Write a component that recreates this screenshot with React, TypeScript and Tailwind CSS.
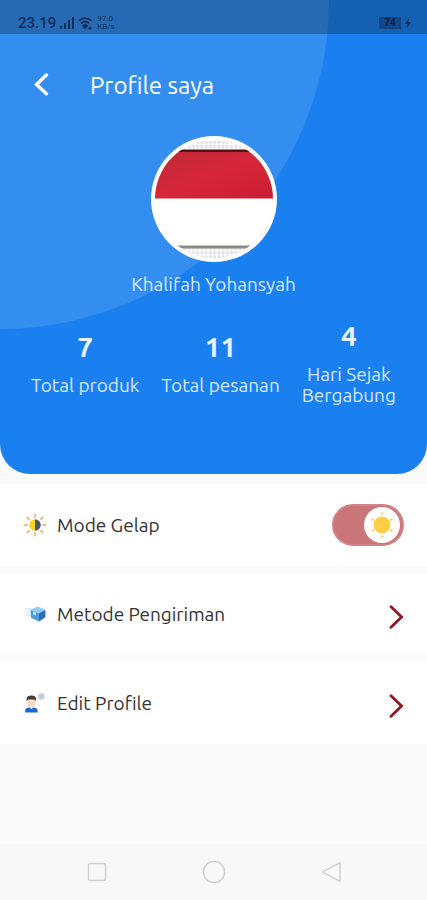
import React, { useState } from 'react';

const stats = [
  { value: '7', label: 'Total produk' },
  { value: '11', label: 'Total pesanan' },
  { value: '4', label: 'Hari Sejak\nBergabung' },
];

const StatusBar: React.FC = () => (
  <div className="relative flex h-[34px] items-end justify-between bg-black/25 pb-px pl-[18px] pr-4 font-['Roboto',sans-serif] text-[#0f2f58]">
    <div className="flex items-center gap-1">
      <span className="text-[15px] font-medium leading-5">23.19</span>
      <svg width="14" height="12" viewBox="0 0 14 12" fill="currentColor" aria-hidden="true">
        <rect x="0" y="9" width="2" height="3" />
        <rect x="4" y="6" width="2" height="6" />
        <rect x="8" y="3" width="2" height="9" />
        <rect x="12" y="0" width="2" height="12" />
      </svg>
      <svg width="15" height="13" viewBox="0 0 15 13" fill="none" stroke="currentColor" strokeWidth="1.6" aria-hidden="true">
        <path d="M0.8 4 Q7 -1.6 13.6 4" />
        <path d="M3 6.4 Q7 2.8 11.4 6.4" />
        <path d="M5 8.8 Q7 6.8 9.2 8.8 L7.2 11 Z" fill="currentColor" />
        <path d="M10 11.4 h4 M12 9.4 v3.4" strokeWidth="1.2" />
      </svg>
      <span className="flex flex-col text-[8px] leading-2">
        <span>97.0</span>
        <span>KB/s</span>
      </span>
    </div>
    <div className="flex h-5 items-center gap-1">
      <span className="flex h-3 w-[22px] items-center justify-center bg-[#0b2e5c]/50 text-[10px] font-bold leading-3 text-[#0a1f40]">74</span>
      <svg width="6" height="10" viewBox="0 0 6 10" fill="currentColor" aria-hidden="true">
        <path d="M4 0 L0 6 H2.6 L2 10 L6 4 H3.4 Z" />
      </svg>
    </div>
  </div>
);

const Avatar: React.FC = () => (
  <svg className="size-[126px]" viewBox="0 0 126 126" role="img" aria-label="Khalifah Yohansyah">
    <defs>
      <clipPath id="face">
        <circle cx="63" cy="63" r="59" />
      </clipPath>
      <pattern id="check" width="6" height="6" patternUnits="userSpaceOnUse" patternTransform="rotate(45)">
        <rect width="6" height="6" fill="#fbfbfb" />
        <rect width="3" height="3" fill="#e4e4e4" />
        <rect x="3" y="3" width="3" height="3" fill="#e4e4e4" />
      </pattern>
      <linearGradient id="red" x1="0" y1="0" x2="1" y2="1">
        <stop offset="0" stopColor="#bd2a38" />
        <stop offset="0.5" stopColor="#d7263a" />
        <stop offset="1" stopColor="#c91c30" />
      </linearGradient>
    </defs>
    <circle cx="63" cy="63" r="63" fill="#fff" />
    <g clipPath="url(#face)">
      <rect width="126" height="126" fill="url(#check)" />
      <rect y="15" width="126" height="48" fill="url(#red)" />
      <rect x="26" y="13.5" width="74" height="2.5" fill="#5a1019" />
      <rect y="62.5" width="126" height="48" fill="#fff" />
      <rect y="109.5" width="126" height="3" fill="#8d8984" />
    </g>
  </svg>
);

const SunMoonIcon: React.FC = () => (
  <svg width="24" height="24" viewBox="0 0 24 24" aria-hidden="true">
    <g stroke="#f3a868" strokeWidth="1.5" strokeLinecap="round">
      <path d="M12 1.2v3M12 19.8v3M1.2 12h3M19.8 12h3M4.2 4.4l2 2M17.8 17.6l2 2M4.2 19.6l2-2M17.8 6.4l2-2" />
    </g>
    <path d="M12 6.2a5.8 5.8 0 0 0 0 11.6Z" fill="#fbd51c" />
    <path d="M12 6.2a5.8 5.8 0 0 1 0 11.6Z" fill="#4d5566" />
  </svg>
);

const BoxIcon: React.FC = () => (
  <svg width="24" height="24" viewBox="0 0 24 24" aria-hidden="true">
    <path d="M2 7h8M4 10h5M3 13h5" stroke="#d3eaf8" strokeWidth="1.5" />
    <path d="M7.6 7.8 14.6 4.6 22.4 7.8 16 11.2Z" fill="#8fcdf2" />
    <path d="M7.6 7.8 16 11.2V19.6L8 15.8Z" fill="#4c9ddb" />
    <path d="M16 11.2 22.4 7.8V15.2L16 19.6Z" fill="#2a70b8" />
    <path d="M10 9.4l3 1.2v3l-3-1.2Z" fill="#bfe3f8" />
  </svg>
);

const UserIcon: React.FC = () => (
  <svg width="24" height="24" viewBox="0 0 24 24" aria-hidden="true">
    <circle cx="18.4" cy="5.4" r="3.4" fill="#c3d6ea" />
    <path d="M16.6 7l3.2-3.2" stroke="#e0b996" strokeWidth="1.2" />
    <path d="M4.4 8h7.8v4.6a3.9 4.2 0 0 1-7.8 0Z" fill="#f6dcc4" />
    <path d="M3.6 10.4V7.6Q4 4.6 8.4 4.6T13 7.6v2.8l-1.2-1.8H5Z" fill="#453b38" />
    <path d="M2.2 21.4v-2Q2.4 17 6.4 16.6L8.4 18l2-1.4q4 .4 4.2 2.8v2Z" fill="#1769cc" />
  </svg>
);

const Arrow: React.FC = () => (
  <svg width="16" height="30" viewBox="0 0 16 30" fill="none" stroke="#921820" strokeWidth="2.8" strokeLinecap="round" aria-hidden="true">
    <path d="M3 7.8 13.6 18 3 28.2" />
  </svg>
);

const rowClasses = 'flex h-[82px] w-full items-center gap-2.5 bg-white pl-[23px] pr-[23px] text-left text-[19px] text-[#333333]';

const App: React.FC = () => {
  const [light, setLight] = useState(true);

  return (
    <div className="flex min-h-screen flex-col bg-[#fafafa] font-['Ubuntu','Noto_Sans',sans-serif]">
      <header className="relative h-[474px] overflow-hidden rounded-b-[30px] bg-[#1b80ef] text-white">
        <div className="absolute -left-[329px] -top-[329px] size-[658px] rounded-full bg-white/11" />
        <StatusBar />

        <div className="relative flex items-center gap-10 px-8 pt-9">
          <button type="button" aria-label="Kembali">
            <svg width="18" height="26" viewBox="0 0 18 26" fill="none" stroke="currentColor" strokeWidth="3.4" aria-hidden="true">
              <path d="M14.4 2 4.6 11.4l9.8 9.4" strokeLinecap="round" />
            </svg>
          </button>
          <h1 className="text-[24px] leading-8">Profile saya</h1>
        </div>

        <div className="relative mt-[34px] flex flex-col items-center gap-2.5">
          <Avatar />
          <p className="text-[19px] leading-6 text-[#d6e7fc]">Khalifah Yohansyah</p>
        </div>

        <dl className="relative mt-6 flex items-center justify-center gap-[22px] text-center text-[#d6e7fc]">
          {stats.map((stat) => (
            <div key={stat.value} className="flex flex-col-reverse gap-3">
              <dt className="whitespace-pre-line text-[19px] leading-[21px]">{stat.label}</dt>
              <dd className="text-[28px] font-bold leading-8 text-[#e8f1fc]">{stat.value}</dd>
            </div>
          ))}
        </dl>
      </header>

      <main className="mt-[10px] flex flex-col gap-[7px]">
        <div className={rowClasses}>
          <SunMoonIcon />
          <label htmlFor="mode" className="flex-1">Mode Gelap</label>
          <label className="relative flex h-[42px] w-[72px] cursor-pointer items-center rounded-full border-2 border-[#d08388] bg-[#c97579] has-checked:justify-end">
            <input
              id="mode"
              type="checkbox"
              role="switch"
              className="sr-only"
              checked={light}
              onChange={(e) => setLight(e.target.checked)}
            />
            <span className="mx-0.5 flex size-[36px] items-center justify-center rounded-full bg-white">
              <svg width="26" height="26" viewBox="0 0 26 26" fill="#fccf47" aria-hidden="true">
                <circle cx="13" cy="13" r="8.4" />
                <path d="M11.8 0.6h2.4L13 4ZM11.8 25.4h2.4L13 22ZM2.2 8.2l1.4-2.2 2.4 3ZM23.8 8.2l-1.4-2.2-2.4 3ZM2.2 17.8l1.4 2.2 2.4-3ZM23.8 17.8l-1.4 2.2-2.4-3Z" />
              </svg>
            </span>
          </label>
        </div>
        <button type="button" className={rowClasses}>
          <BoxIcon />
          <span className="flex-1">Metode Pengiriman</span>
          <Arrow />
        </button>
        <button type="button" className={rowClasses}>
          <UserIcon />
          <span className="flex-1">Edit Profile</span>
          <Arrow />
        </button>
      </main>

      <nav className="mt-auto grid h-14 grid-cols-3 items-center justify-items-center bg-[#f8f8f8] px-[38px] text-[#cfcfcf]">
        <button type="button" aria-label="Aplikasi terbaru">
          <svg width="24" height="24" viewBox="0 0 24 24" fill="none" stroke="currentColor" strokeWidth="1.4">
            <rect x="3.5" y="3.5" width="17" height="17" rx="2" />
          </svg>
        </button>
        <button type="button" aria-label="Beranda">
          <svg width="24" height="24" viewBox="0 0 24 24" fill="none" stroke="currentColor" strokeWidth="1.4">
            <circle cx="12" cy="12" r="10.6" />
          </svg>
        </button>
        <button type="button" aria-label="Kembali ke layar sebelumnya">
          <svg width="24" height="24" viewBox="0 0 24 24" fill="none" stroke="currentColor" strokeWidth="1.4" strokeLinejoin="round">
            <path d="M21 2.6v18.8L3.6 12Z" />
          </svg>
        </button>
      </nav>
    </div>
  );
};

export default App;
